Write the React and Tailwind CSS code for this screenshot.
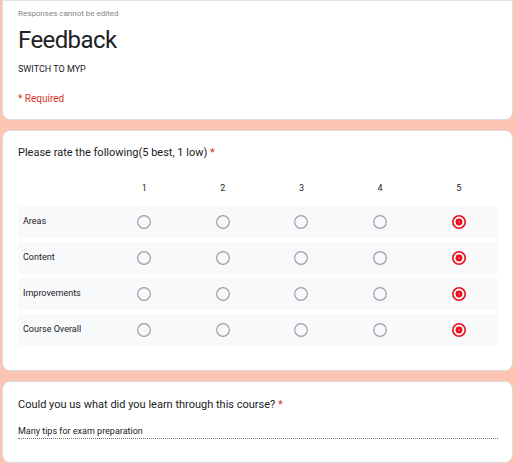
import React from 'react';

const ROWS = ['Areas', 'Content', 'Improvements', 'Course Overall'];
const COLS = [1, 2, 3, 4, 5];

function Radio({ checked }) {
  if (checked) {
    return (
      <svg width="14" height="14" viewBox="0 0 14 14">
        <circle cx="7" cy="7" r="6.2" fill="none" stroke="#e8101a" strokeWidth="1.6" />
        <circle cx="7" cy="7" r="3.4" fill="#e8101a" />
        <circle cx="7" cy="7" r="0.9" fill="#f36a6a" />
      </svg>
    );
  }
  return (
    <svg width="14" height="14" viewBox="0 0 14 14">
      <circle cx="7" cy="7" r="6.3" fill="none" stroke="#9aa0a6" strokeWidth="1.2" />
    </svg>
  );
}

function Card({ className = '', children }) {
  return (
    <div className={`bg-white border border-[#dadce0] rounded-lg pl-[15px] pr-[14px] ${className}`}>
      {children}
    </div>
  );
}

export default function App() {
  return (
    <div
      className="w-[516px] h-[463px] overflow-hidden bg-[#fcc4b3] pl-[2px] pr-[3px] flex flex-col gap-[10px]"
      style={{ fontFamily: 'Roboto, "Liberation Sans", sans-serif' }}
    >
      <Card className="h-[120px] rounded-t-none border-t-[#e3e3e3] pt-[7px]">
        <p className="text-[8px] leading-[12px] text-[#80868b]">Responses cannot be edited</p>
        <h1 className="mt-[5px] text-[24px] leading-[30px] tracking-[-0.6px] text-[#202124]">
          Feedback
        </h1>
        <p className="mt-[7px] text-[9px] leading-[14px] text-[#202124]">SWITCH TO MYP</p>
        <p className="mt-[16px] text-[10px] leading-[14px] text-[#d93025]">* Required</p>
      </Card>

      <Card className="h-[242px] pt-[15px]">
        <p className="text-[11px] leading-[14px] text-[#202124]">
          Please rate the following(5 best, 1 low) <span className="text-[#d93025]">*</span>
        </p>
        <div className="mt-[22px] grid grid-cols-[87px_repeat(5,1fr)] h-[14px] items-center text-[9px] text-[#202124]">
          <span />
          {COLS.map((c) => (
            <span key={c} className="text-center">{c}</span>
          ))}
        </div>
        <div className="mt-[10px] flex flex-col gap-[4px]">
          {ROWS.map((row) => (
            <div
              key={row}
              className="grid grid-cols-[87px_repeat(5,1fr)] h-[32px] items-center bg-[#f8f9fa] rounded-sm"
            >
              <span className="pl-[5px] text-[9px] text-[#202124]">{row}</span>
              {COLS.map((c) => (
                <span key={c} className="flex justify-center">
                  <Radio checked={c === 5} />
                </span>
              ))}
            </div>
          ))}
        </div>
      </Card>

      <Card className="h-[82px] pt-[16px]">
        <p className="text-[11px] leading-[14px] text-[#202124]">
          Could you us what did you learn through this course? <span className="text-[#d93025]">*</span>
        </p>
        <p className="mt-[13px] text-[9px] leading-[12px] text-[#202124] pb-[1px] border-b border-dotted border-[#70757a]">
          Many tips for exam preparation
        </p>
      </Card>
    </div>
  );
}
